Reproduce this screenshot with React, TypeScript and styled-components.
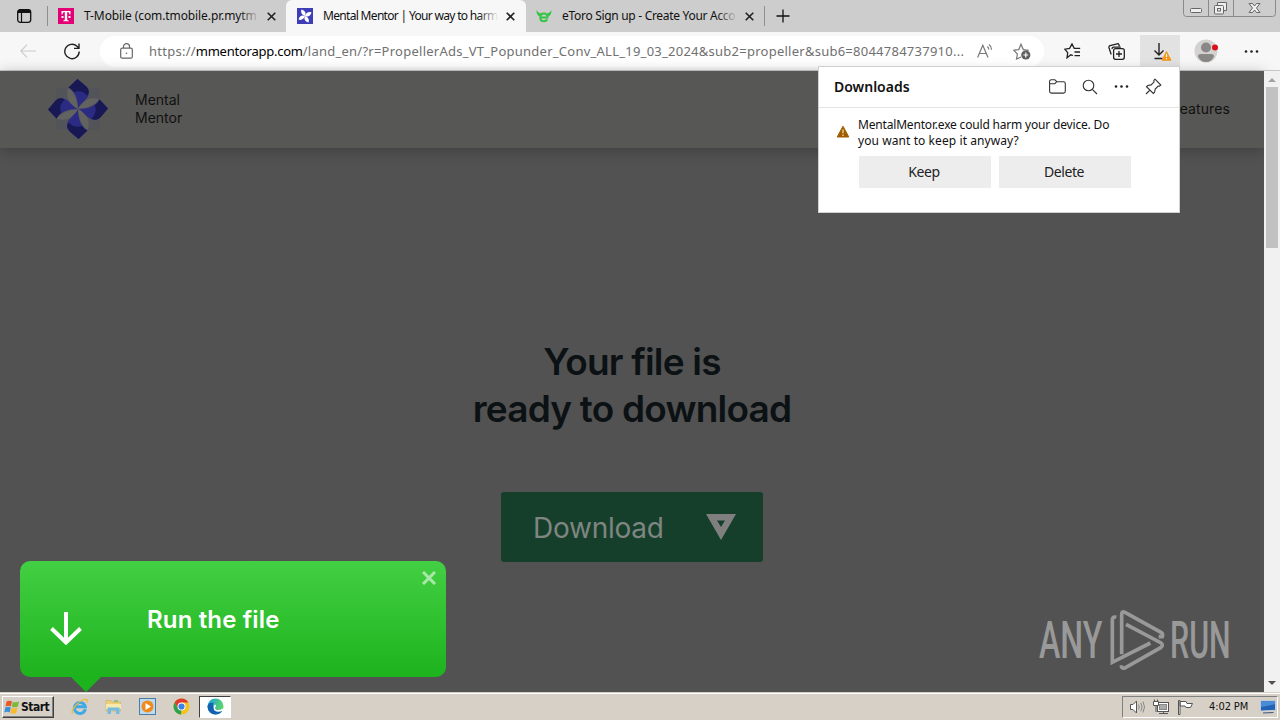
import React from 'react';
import styled, { createGlobalStyle, css } from 'styled-components';

const App = () => (
  <>
    <GlobalStyle />
    <Screen>
      <TabStrip>
        <TabActions>
          <svg width='16' height='16' viewBox='0 0 16 16'>
            <rect x='1.7' y='1.7' width='13' height='12.6' rx='2.5' fill='none' stroke='#111' strokeWidth='1.3' />
            <path d='M1.5 4a2.5 2.5 0 0 1 2.500-2.500h8A2.500 2.500 0 0 1 14.500 4v1h-13z' fill='#111' />
            <path d='M5.500 5v9' stroke='#111' strokeWidth='1.200' />
          </svg>
        </TabActions>
        <Separator />
        <Tab $width={238}>
          <svg width='16' height='16' viewBox='0 0 16 16'>
            <rect width='16' height='16' fill='#e20074' />
            <path d='M3.500 6.500V3h9v3.500h-1C11.300 4.800 10.600 4 9.200 4v7.300c0 .9.500 1.200 1.600 1.200v.7H5.200v-.7c1.100 0 1.600-.3 1.600-1.200V4C5.400 4 4.700 4.800 4.500 6.500zM3.500 8h2v2h-2zM10.500 8h2v2h-2z' fill='#fff' />
          </svg>
          <TabTitle $spacing={-0.1} $fade='#cdcdcd'>T-Mobile (com.tmobile.pr.mytm</TabTitle>
          <CloseIcon />
        </Tab>
        <Tab $width={240} $active>
          <svg width='16' height='16' viewBox='0 0 16 16'>
            <rect width='16' height='16' fill='#3d3db8' />
            {[0, 90, 180, 270].map((angle) => (
              <path key={angle} d='M8 8C5 7 3.300 4.500 4.500 1.500 8 2.600 9.500 4.800 8 8z' fill='#fff' transform={`rotate(${angle} 8 8)`} />
            ))}
          </svg>
          <TabTitle $spacing={-0.68} $fade='#f7f7f7'>Mental Mentor | Your way to harm</TabTitle>
          <CloseIcon />
        </Tab>
        <Tab $width={238}>
          <svg width='16' height='16' viewBox='0 0 16 16'>
            <path d='M.5 2c0 3 .5 5.500 3.500 6.500L5 5.500C3 5 1.500 4 .5 2zM15.500 2c0 3-.5 5.500-3.500 6.500L11 5.500c2-.5 3.500-1.500 4.500-3.500z' fill='#35c545' />
            <path d='M11.200 11.300c-.7 1.400-1.800 2-3.200 2-2.300 0-3.700-1.600-3.700-3.900S5.700 5.500 8 5.500c2.400 0 3.700 1.600 3.500 4H5.200' fill='none' stroke='#35c545' strokeWidth='2' />
          </svg>
          <TabTitle $spacing={-0.3} $fade='#cdcdcd'>eToro Sign up - Create Your Acco</TabTitle>
          <CloseIcon />
        </Tab>
        <Separator />
        <NewTab>
          <svg width='14' height='14' viewBox='0 0 14 14'>
            <path d='M7 .5v13M.5 7h13' stroke='#111' strokeWidth='1.300' />
          </svg>
        </NewTab>
        <WindowControls>
          <svg width='93' height='17' viewBox='0 0 93 17' fill='none' stroke='#666'>
            <path d='M.5 0v13.500a3 3 0 0 0 3 3h86a3 3 0 0 0 3-3V0M25.500 0v16M50.500 0v16' stroke='#8a8a8a' />
            <rect x='7.500' y='8.500' width='11' height='4' rx='1' fill='#eee' />
            <path d='M34.500 5V2.500h9v8H41' fill='#eee' />
            <rect x='31.500' y='5.500' width='9' height='8.500' rx='1' fill='#eee' />
            <rect x='34.500' y='8.500' width='3' height='2.500' />
            <path d='M66 3.500h3.500l2 2.500 2-2.500H77l-3.500 4.500 3.500 4.500h-3.500l-2-2.500-2 2.500H66L69.500 8z' fill='#eee' />
          </svg>
        </WindowControls>
      </TabStrip>

      <Toolbar>
        <ToolbarIcon $left={20} $width={16}>
          <svg width='16' height='14' viewBox='0 0 16 14' fill='none' stroke='#ccc' strokeWidth='1.200'>
            <path d='M7 .7.8 7 7 13.300M.8 7H16' />
          </svg>
        </ToolbarIcon>
        <ToolbarIcon $left={28} $width={16}>
          <svg width='16' height='17' viewBox='0 0 16 17' fill='none' stroke='#222' strokeWidth='1.400'>
            <path d='M15.200 8.500A7.200 7.200 0 1 1 13 3.300L15 5.200M15 .5v4.900h-5' />
          </svg>
        </ToolbarIcon>
        <AddressBar>
          <svg width='13' height='16' viewBox='0 0 13 16' fill='none' stroke='#666' strokeWidth='1.200'>
            <rect x='.7' y='5.200' width='11.600' height='10' rx='1.500' />
            <path d='M3.500 5V3.600a3 3 0 0 1 6 0V5' />
            <circle cx='6.500' cy='10.200' r='.8' fill='#666' stroke='none' />
          </svg>
          <Url>
            https://<UrlHost>mmentorapp.com</UrlHost>/land_en/?r=PropellerAds_VT_Popunder_Conv_ALL_19_03_2024&amp;sub2=propeller&amp;sub6=8044784737910...
          </Url>
          <svg width='17' height='16' viewBox='0 0 17 16' fill='none' stroke='#777' strokeWidth='1.200'>
            <path d='M.6 14.500 5.800 2.200 11 14.500M2.300 10.500h7M10.300 3.500c1 .7 1.500 1.700 1.500 3M12 1.500c1.700 1.200 2.600 3 2.600 5.200' />
          </svg>
          <FavouriteIcon width='18' height='17' viewBox='0 0 18 17' fill='none' stroke='#777' strokeWidth='1.200'>
            <path d='M8 14 3.500 16l.9-5L.8 7.300l5-.7L8 1.200l2.300 5.400 5.400.7' />
            <circle cx='12.800' cy='12' r='4.600' fill='#5f5f5f' stroke='none' />
            <path d='M12.800 9.600v4.800M10.400 12h4.800' stroke='#fff' />
          </FavouriteIcon>
        </AddressBar>
        <ToolbarIcon $left={20} $width={17}>
          <svg width='17' height='16' viewBox='0 0 17 16' fill='none' stroke='#222' strokeWidth='1.300'>
            <path d='M9 12.500 6.800 11.800 3 14.800l.7-5.200L.8 6.200l4.800-.8L8 .9l2.200 4.500h6M10.500 9H16M10.500 12.700H16' />
          </svg>
        </ToolbarIcon>
        <ToolbarIcon $left={27} $width={17}>
          <svg width='17' height='17' viewBox='0 0 17 17' fill='none' stroke='#222' strokeWidth='1.300'>
            <rect x='5.600' y='5.600' width='10.700' height='10.700' rx='2' />
            <path d='M11 8v6M8 11h6M3.200 11.500 1 4.700Q.6 3.200 2 2.700L9.200.8q1.300-.3 1.700.8l.5 1.600M4 6q0-1.800 1.800-1.800h7' />
          </svg>
        </ToolbarIcon>
        <DownloadsButton>
          <svg width='20' height='20' viewBox='0 0 20 20' fill='none' stroke='#222' strokeWidth='1.400'>
            <path d='M6 1v12M1.500 8.500 6 13l4.500-4.500M1.500 16.500h8' />
            <path d='M13.500 9.500 18 18.300H9z' fill='#f7981d' stroke='#f7981d' strokeLinejoin='round' strokeWidth='1' />
            <path d='M13.500 12v3M13.500 16v1.200' stroke='#fff' strokeWidth='1.100' />
          </svg>
        </DownloadsButton>
        <ToolbarIcon $left={14} $width={26}>
          <svg width='26' height='24' viewBox='0 0 26 24'>
            <circle cx='12' cy='12' r='11.500' fill='#d4d2d0' />
            <circle cx='12' cy='8.500' r='5' fill='#8a8886' />
            <path d='M4 17.500q0-2.500 2.500-2.500h11q2.500 0 2.500 2.500Q17.500 23 12 23T4 17.500z' fill='#8a8886' />
            <circle cx='21' cy='8.500' r='3' fill='#d9101c' />
          </svg>
        </ToolbarIcon>
        <ToolbarIcon $left={24} $width={16}>
          <Dots />
        </ToolbarIcon>
      </Toolbar>

      <Viewport>
        <Page>
          <PageHeader>
            <PinwheelLogo />
            <Brand>
              Mental
              <br />
              Mentor
            </Brand>
            <NavLink>Features</NavLink>
          </PageHeader>
          <Hero>
            <HeroTitle>
              Your file is
              <br />
              ready to download
            </HeroTitle>
            <DownloadCta>
              <CtaLabel>Download</CtaLabel>
              <svg width='30' height='27' viewBox='0 0 30 27'>
                <path fillRule='evenodd' d='M0 0h30L15 26zM11 6.500 15 13l4-6.500z' fill='#7f7f7f' />
              </svg>
            </DownloadCta>
          </Hero>
        </Page>
        <Scrollbar>
          <ScrollArrow $up />
          <ScrollThumb />
          <ScrollArrow />
        </Scrollbar>
      </Viewport>

      <Taskbar>
        <StartButton>
          <svg width='16' height='16' viewBox='0 0 16 16'>
            <path d='M2.500 2.500Q5 1 8 2.300L7 7.300Q4 6 1.500 7.500z' fill='#e8582a' />
            <path d='M8.800 2.800Q11.500 4 15 2.500L13.800 7.700Q10.500 9 7.800 7.700z' fill='#7cb93c' />
            <path d='M1.300 8.500Q4 7 6.800 8.300L5.700 13.500Q3 12 .3 13.500z' fill='#3d8fdc' />
            <path d='M7.600 8.800Q10.300 10 13.500 8.700L12.200 14Q9 15.300 6.500 14z' fill='#f6bb27' />
          </svg>
          Start
        </StartButton>
        <QuickLaunch>
          <svg width='17' height='17' viewBox='0 0 17 17' fill='none'>
            <path d='M14.300 11.200A5.500 5.500 0 1 1 14.300 8.800H5' stroke='#3fa9e5' strokeWidth='3' />
            <path d='M1.800 15.500C-1 13 6.500 3.500 13.500 1.500c3-.8 3 1 2 3' stroke='#eeb934' strokeWidth='1.300' />
          </svg>
          <svg width='17' height='17' viewBox='0 0 17 17'>
            <path d='M1 2.500h5l1 1.500h8.500V13H1z' fill='#edcf77' stroke='#c9a64c' strokeWidth='.5' />
            <path d='M1 6h15v5H1z' fill='#f7e8ad' />
            <path d='M2.500 16V9.500h12V16H11v-3.500H6V16z' fill='#75bce0' />
            <path d='M9 3h4' stroke='#56ad5c' />
          </svg>
          <svg width='17' height='17' viewBox='0 0 17 17'>
            <rect x='.5' y='.5' width='16' height='16' fill='#bcdaf0' stroke='#4a7da8' />
            <circle cx='8.500' cy='8.500' r='6' fill='#f28a18' />
            <path d='m6.500 5 5.500 3.500L6.500 12z' fill='#fff' />
          </svg>
          <svg width='17' height='17' viewBox='0 0 17 17'>
            <circle cx='8.500' cy='8.500' r='8' fill='#f5c320' />
            <path d='M1.600 4.500A8 8 0 0 1 15.400 4.500H8.500L5 10.500z' fill='#de3b2e' />
            <path d='M1.600 4.500 5.200 10.500 8.500 12.500 8 16.500A8 8 0 0 1 1.600 4.500z' fill='#2ea14f' />
            <circle cx='8.500' cy='8.500' r='4' fill='#fff' />
            <circle cx='8.500' cy='8.500' r='3.100' fill='#3f7fe8' />
          </svg>
        </QuickLaunch>
        <ActiveTask>
          <svg width='17' height='17' viewBox='0 0 17 17'>
            <defs>
              <linearGradient id='edge' x1='0' y1='0' x2='1' y2='.4'>
                <stop offset='0' stopColor='#1b9de2' />
                <stop offset='1' stopColor='#5ed66a' />
              </linearGradient>
            </defs>
            <circle cx='8.500' cy='8.500' r='8' fill='url(#edge)' />
            <path d='M.5 8.500C1 5 4 4.500 6.500 5 5 8 6 13 15.500 12.500 13.500 15.500 11 16.500 8.500 16.500A8 8 0 0 1 .5 8.500z' fill='#1261b2' />
            <path d='M8 9.500q0 2 2 2.500 3 .5 6-1.500v2q-5 2.500-8.500 0Q5.500 9.500 8 6.500 10 7 8 9.500z' fill='#fff' />
          </svg>
        </ActiveTask>
        <Tray>
          <svg width='17' height='16' viewBox='0 0 17 16' fill='#fff' stroke='#555'>
            <path d='M1.500 5.500h2.500L7.500 2v12L4 10.500H1.500z' />
            <path d='M9.500 5.500q1.500 2.500 0 5M11.800 3.800q2.500 4.200 0 8.400M14 2.500q3 5.500 0 11' fill='none' stroke='#888' />
          </svg>
          <svg width='17' height='16' viewBox='0 0 17 16' fill='#fff' stroke='#555'>
            <rect x='4.500' y='3.500' width='11' height='9' />
            <rect x='6.500' y='5.500' width='7' height='5' fill='#aaa' stroke='#888' />
            <path d='M6 14.500h9M10.500 12.500v2' />
            <path d='M.5 2.500h5v4h-5zM1.500.5v2M4.500.5v2M3 6.500V13' />
          </svg>
          <svg width='17' height='16' viewBox='0 0 17 16' fill='#fff' stroke='#555'>
            <path d='M1.500 1.500h1.500v14H1.500zM3 2.500h6l1 2h5.500l-2 4H9l-1-1.500H3z' />
          </svg>
          <Clock>4:02 PM</Clock>
          <svg width='16' height='14' viewBox='0 0 16 14'>
            <path d='M.5.800 15.500.8v9.500L.5 11z' fill='#2362b4' stroke='#cfd9e6' strokeWidth='.8' />
            <path d='M1 1.300h14v3L1 7z' fill='#4b8cd6' />
            <path d='M3 13 13.500 12.500' stroke='#38557c' />
          </svg>
        </Tray>
      </Taskbar>

      <DownloadsPopup>
        <PopupHeader>
          <PopupTitle>Downloads</PopupTitle>
          <PopupActions>
            <svg width='17' height='15' viewBox='0 0 17 15' fill='none' stroke='#333' strokeWidth='1.100'>
              <path d='M.6 12.300V2.500A1.800 1.800 0 0 1 2.400.7h3.400l2 2h6.700a1.800 1.800 0 0 1 1.800 1.800v7.800a1.800 1.800 0 0 1-1.800 1.800H2.400a1.800 1.800 0 0 1-1.800-1.800zM.6 4.700h5.200l2-2' />
            </svg>
            <svg width='16' height='16' viewBox='0 0 16 16' fill='none' stroke='#333' strokeWidth='1.100'>
              <circle cx='6.500' cy='6.500' r='5.300' />
              <path d='m10.300 10.300 4.700 4.700' />
            </svg>
            <Dots />
            <svg width='17' height='17' viewBox='0 0 17 17' fill='none' stroke='#333' strokeWidth='1.100'>
              <path d='m10 1.200 5.800 5.800-1.300 1.200-1.300-.2-3 3-.6 3.300-1.300 1.200-6.800-6.800 1.300-1.200 3.300-.6 3-3-.3-1.400zM5 12 1 16' />
            </svg>
          </PopupActions>
        </PopupHeader>
        <PopupBody>
          <svg width='14' height='13' viewBox='0 0 14 13'>
            <path d='M7 1.200 12.800 12H1.200z' fill='#9d5d00' stroke='#9d5d00' strokeLinejoin='round' />
            <path d='M7 4.500v3.700M7 9.500V11' stroke='#fbe3a2' strokeWidth='1.200' />
          </svg>
          <div>
            <WarningLine $spacing={-0.18}>MentalMentor.exe could harm your device. Do</WarningLine>
            <WarningLine $spacing={0.08}>you want to keep it anyway?</WarningLine>
            <PopupButtons>
              <PopupButton>Keep</PopupButton>
              <PopupButton>Delete</PopupButton>
            </PopupButtons>
          </div>
        </PopupBody>
      </DownloadsPopup>

      <Hint>
        <svg width='32' height='33' viewBox='0 0 32 33' fill='none' stroke='#fff' strokeWidth='4'>
          <path d='M16 0v30M1.500 16.500 16 30.500l14.500-14' />
        </svg>
        <HintText>Run the file</HintText>
        <HintClose width='14' height='14' viewBox='0 0 14 14' stroke='#a9e8a9' strokeWidth='3'>
          <path d='m1 1 12 12M13 1 1 13' />
        </HintClose>
      </Hint>

      <Watermark />
    </Screen>
  </>
);

const CloseIcon = () => (
  <svg width='9' height='9' viewBox='0 0 9 9' stroke='#222' strokeWidth='1.600'>
    <path d='m.7.7 7.600 7.600M8.300.7.7 8.300' />
  </svg>
);

const Dots = () => (
  <svg width='15' height='3' viewBox='0 0 15 3' fill='#222'>
    <circle cx='2' cy='1.500' r='1.300' />
    <circle cx='7.500' cy='1.500' r='1.300' />
    <circle cx='13' cy='1.500' r='1.300' />
  </svg>
);

const PETAL_ANGLES = [0, 90, 180, 270];

const PinwheelLogo = () => (
  <svg width='60' height='60' viewBox='0 0 60 60'>
    <rect x='8' y='9' width='44' height='42' rx='4' fill='#53545a' />
    {PETAL_ANGLES.map((angle) => (
      <path key={angle} d='M20.500 8.500C17 18 21 25 30 30 29.500 22 27 15 20.500 8.500z' fill='#626361' transform={`rotate(${angle} 30 30)`} />
    ))}
    {PETAL_ANGLES.map((angle) => (
      <g key={angle} transform={`rotate(${angle} 30 30)`}>
        <path d='M29.500 0 20.500 8.500C27 12 30 20 30 30 31.500 24 43 20 40.500 11z' fill='#2b2b83' />
        <path d='M29.500 0 20.500 8.500q3.500 1.500 5.500 4.500Q34 10.500 39.500 16.500 42.500 12 38.500 7.500z' fill='#171854' />
      </g>
    ))}
  </svg>
);

const Watermark = () => (
  <WatermarkSvg width='194' height='64' viewBox='54 56 582 192' fill='none' stroke='#999' strokeWidth='11'>
    <path d='M289 84Q277 80 277 92V219L391 161' />
    <path d='M305 195V76Q305 64 315 69L423 129Q430 134 427 142L416 142' />
    <path d='M318 105 422 160Q432 168 422 175L314 236Q304 239 304 228' />
    <WatermarkText x='57' y='207' textLength='190' lengthAdjust='spacingAndGlyphs'>ANY</WatermarkText>
    <WatermarkText x='450' y='207' textLength='182' lengthAdjust='spacingAndGlyphs'>RUN</WatermarkText>
  </WatermarkSvg>
);

export default App;

const GlobalStyle = createGlobalStyle`
  body {
    margin: 0;
    overflow: hidden;
  }

  * {
    box-sizing: border-box;
  }

  svg {
    display: block;
    flex-shrink: 0;
  }
`;

const Screen = styled.div`
  position: relative;
  display: flex;
  flex-direction: column;

  width: 1280px;
  height: 720px;
  overflow: hidden;

  font-family: 'Noto Sans', 'Open Sans', sans-serif;
  font-size: 12px;
  color: #111;
`;

const TabStrip = styled.div`
  display: flex;
  align-items: center;
  flex: 0 0 32px;

  background: #cdcdcd;
`;

const TabActions = styled.div`
  flex: 0 0 47px;
  padding-left: 16px;
`;

const Separator = styled.div`
  width: 1px;
  height: 20px;
  background: #8f8f8f;
`;

const Tab = styled.div<{ $width: number; $active?: boolean }>`
  display: flex;
  align-items: center;
  flex: 0 0 ${({ $width }) => $width}px;

  height: 32px;
  padding: 0 ${({ $active }) => ($active ? 11 : 10)}px;
  padding-left: ${({ $active }) => ($active ? 11 : 10)}px;

  ${({ $active }) =>
    $active &&
    css`
      border-radius: 6px 6px 0 0;
      background: #f7f7f7;
    `}
`;

const TabTitle = styled.div<{ $spacing: number; $fade: string }>`
  position: relative;
  flex: 0 0 175px;

  margin: 0 auto 0 10px;

  line-height: 18px;
  letter-spacing: ${({ $spacing }) => $spacing}px;
  white-space: nowrap;

  &::after {
    content: '';
    position: absolute;
    inset: 0 -4px 0 auto;
    width: 24px;
    background: linear-gradient(to right, transparent, ${({ $fade }) => $fade} 85%);
  }
`;

const NewTab = styled.div`
  margin-left: 11px;
`;

const WindowControls = styled.div`
  align-self: flex-start;
  margin-left: auto;
  padding-right: 4px;
`;

const Toolbar = styled.div`
  display: flex;
  align-items: center;
  flex: 0 0 39px;

  border-bottom: 1px solid #c6cac9;
  background: #f7f7f7;
`;

const ToolbarIcon = styled.div<{ $left: number; $width: number }>`
  flex: 0 0 ${({ $width }) => $width}px;
  margin-left: ${({ $left }) => $left}px;
`;

const AddressBar = styled.div`
  display: flex;
  align-items: center;
  flex: 0 0 943px;

  height: 31px;
  margin-left: 20px;
  padding: 0 13px 0 20px;
  border-radius: 16px;

  background: #fff;
`;

const Url = styled.div`
  flex: 0 0 828px;
  margin-left: 16px;

  font-size: 13px;
  letter-spacing: 0.25px;
  white-space: nowrap;

  color: #707070;
`;

const UrlHost = styled.span`
  letter-spacing: -0.25px;
  color: #000;
`;

const FavouriteIcon = styled.svg`
  margin-left: 19px;
`;

const DownloadsButton = styled.div`
  flex: 0 0 40px;

  height: 32px;
  margin-left: 15px;
  padding: 7px 0 0 13px;

  background: #e2e2e2;
`;

const Viewport = styled.div`
  display: flex;
  flex: 0 0 621px;
`;

const Page = styled.div`
  flex: 1;

  font-family: Inter, sans-serif;

  background: #525252;
`;

const PageHeader = styled.div`
  display: flex;
  align-items: center;

  height: 77px;
  padding: 0 34px 2px 48px;

  background: #575755;
  box-shadow: 0 2px 14px rgba(0, 0, 0, 0.25);
`;

const Brand = styled.div`
  margin-left: 27px;

  font-size: 14px;
  line-height: 18px;
`;

const NavLink = styled.div`
  margin-left: auto;

  font-size: 14px;
  letter-spacing: 0.1px;
`;

const Hero = styled.div`
  display: flex;
  flex-direction: column;
  align-items: center;

  padding-top: 190px;
`;

const HeroTitle = styled.h1`
  margin: 0;

  font-weight: 600;
  font-size: 37px;
  line-height: 47px;
  letter-spacing: -0.8px;
  text-align: center;

  color: #0c1114;
`;

const DownloadCta = styled.div`
  display: flex;
  align-items: center;
  justify-content: space-between;

  width: 262px;
  height: 70px;
  margin-top: 60px;
  padding: 0 27px 0 32px;
  border-radius: 3px;

  background: #153f2b;
`;

const CtaLabel = styled.span`
  padding-top: 2px;

  font-size: 28px;
  letter-spacing: -0.25px;

  color: #7f8581;
`;

const Scrollbar = styled.div`
  display: flex;
  flex-direction: column;
  align-items: center;
  flex: 0 0 16px;

  padding: 7px 0;

  background: #f1f1f1;
`;

const ScrollArrow = styled.div<{ $up?: boolean }>`
  margin-top: ${({ $up }) => ($up ? 0 : 'auto')};
  border: 4px solid transparent;

  ${({ $up }) =>
    $up
      ? css`
          border-top: 0;
          border-bottom-color: #a3a3a3;
        `
      : css`
          border-bottom: 0;
          border-top-color: #505050;
        `}
`;

const ScrollThumb = styled.div`
  width: 12px;
  height: 161px;
  margin-top: 5px;
  background: #c1c1c1;
`;

const Taskbar = styled.div`
  display: flex;
  align-items: center;
  flex: 0 0 28px;

  padding: 0 2px;
  border-top: 1px solid #d6d0c7;
  box-shadow: inset 0 1px #fff;

  background: #d6d0c7;
`;

const StartButton = styled.div`
  display: flex;
  align-items: center;
  gap: 1px;

  width: 52px;
  height: 22px;
  padding-left: 1px;
  border: 1px solid;
  border-color: #fff #404040 #404040 #fff;
  box-shadow: inset -1px -1px #808080;

  font-family: 'DejaVu Sans Condensed', 'DejaVu Sans', sans-serif;
  font-weight: 700;
  font-size: 12px;
  letter-spacing: -0.5px;
`;

const QuickLaunch = styled.div`
  display: flex;
  gap: 17px;
  margin-left: 17px;
`;

const ActiveTask = styled.div`
  display: flex;
  align-items: center;
  justify-content: center;

  width: 32px;
  height: 22px;
  margin-left: 9px;
  border: 1px solid;
  border-color: #404040 #fff #fff #404040;

  background: #fff;
`;

const Tray = styled.div`
  display: flex;
  align-items: center;
  gap: 7px;

  width: 156px;
  height: 22px;
  margin-left: auto;
  padding-left: 6px;
  border: 1px solid;
  border-color: #808080 #fff #fff #808080;
`;

const Clock = styled.div`
  flex: 0 0 40px;
  margin: 0 4px 0 8px;

  font-family: 'DejaVu Sans Condensed', 'DejaVu Sans', sans-serif;
  font-size: 11px;
  letter-spacing: -0.1px;
  white-space: nowrap;
`;

/* Overlays */

const DownloadsPopup = styled.div`
  position: absolute;
  top: 66px;
  left: 818px;

  width: 362px;
  height: 147px;
  border: 1px solid #d0d0d0;

  background: #fff;
`;

const PopupHeader = styled.div`
  display: flex;
  align-items: center;
  justify-content: space-between;

  height: 41px;
  padding: 0 17px 1px 15px;
  border-bottom: 1px solid #e3e3e3;
`;

const PopupTitle = styled.div`
  font-weight: 600;
  font-size: 14px;
`;

const PopupActions = styled.div`
  display: flex;
  align-items: center;
  gap: 16px;
`;

const PopupBody = styled.div`
  display: flex;
  gap: 8px;
  padding: 9px 0 0 17px;

  & > svg {
    margin-top: 8px;
  }
`;

const WarningLine = styled.div<{ $spacing: number }>`
  font-size: 12px;
  line-height: 16px;
  letter-spacing: ${({ $spacing }) => $spacing}px;
  white-space: nowrap;
`;

const PopupButtons = styled.div`
  display: flex;
  gap: 8px;
  margin: 7px 0 0 1px;
`;

const PopupButton = styled.div`
  width: 132px;
  height: 32px;
  padding-right: 2px;

  font-size: 14px;
  line-height: 32px;
  letter-spacing: -0.4px;
  text-align: center;

  color: #222;
  background: #ededed;
`;

const Hint = styled.div`
  position: absolute;
  top: 561px;
  left: 20px;

  display: flex;
  align-items: center;

  width: 426px;
  height: 116px;
  padding-left: 30px;
  border-radius: 10px;

  background: linear-gradient(#43cf43, #1db31d);

  & > svg:first-child {
    margin-top: 18px;
  }

  &::after {
    content: '';
    position: absolute;
    top: 115px;
    left: 50px;
    border: 16px solid transparent;
    border-top-color: #1db31d;
    border-bottom: 0;
  }
`;

const HintText = styled.div`
  margin-left: 65px;

  font-family: Inter, sans-serif;
  font-weight: 600;
  font-size: 24px;
  letter-spacing: 0.15px;

  color: #fff;
`;

const HintClose = styled.svg`
  position: absolute;
  top: 10px;
  right: 10px;
`;

const WatermarkSvg = styled.svg`
  position: absolute;
  top: 608px;
  left: 1038px;
  overflow: visible;
`;

const WatermarkText = styled.text`
  font-family: Roboto, sans-serif;
  font-weight: 500;
  font-size: 153px;

  fill: #999;
  stroke: none;
`;
